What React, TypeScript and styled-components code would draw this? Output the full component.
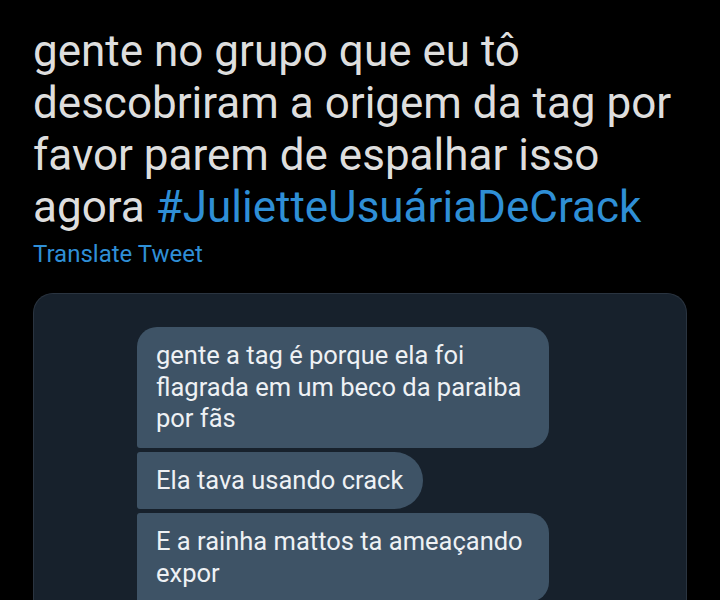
import React from 'react';
import styled, { createGlobalStyle, css } from 'styled-components';

const GlobalStyle = createGlobalStyle`
  html, body {
    margin: 0;
    padding: 0;
    background: #000000;
  }

  body {
    font-family: Roboto, 'Noto Sans', sans-serif;
    -webkit-font-smoothing: antialiased;
  }
`;

const StyledTweet = styled.main`
  width: 720px;
  height: 600px;
  overflow: hidden;
  box-sizing: border-box;
  padding: 25px 0 0 33px;
  background: #000000;
`;

const TweetText = styled.p`
  margin: 0;
  width: 665px;
  font-size: 44px;
  line-height: 52px;
  font-weight: normal;
  color: #dedede;
`;

const Hashtag = styled.span`
  color: #2f8fd6;
`;

const Translate = styled.div`
  margin-top: 6px;
  font-size: 24px;
  line-height: 30px;
  color: #2f8fd6;
`;

const MediaCard = styled.div`
  display: flex;
  flex-direction: column;
  align-items: flex-start;
  gap: 4px;
  width: 654px;
  height: 340px;
  margin-top: 24px;
  padding: 33px 0 0 103px;
  box-sizing: border-box;

  background: #17212c;
  border: 1px solid #2a3440;
  border-bottom: none;
  border-radius: 20px 20px 0 0;
`;

type BubbleKind = 'first' | 'middle';

const Bubble = styled.div<{ $kind: BubbleKind; $pill?: boolean }>`
  max-width: 412px;
  box-sizing: border-box;
  padding: 13px 24px 13px 19px;

  font-size: 25.5px;
  line-height: 31.5px;
  color: #eef1f4;
  background: #3e5366;

  ${({ $kind }) =>
    $kind === 'first'
      ? css`
          border-radius: 20px 20px 20px 3px;
        `
      : css`
          border-radius: 3px 20px 20px 3px;
        `}

  ${({ $pill }) =>
    $pill &&
    css`
      padding-right: 20px;
      border-radius: 3px 29px 29px 3px;
    `}
`;

function App() {
  return (
    <>
      <GlobalStyle />
      <StyledTweet>
        <TweetText>
          gente no grupo que eu tô descobriram a origem da tag por favor parem
          de espalhar isso agora <Hashtag>#JulietteUsuáriaDeCrack</Hashtag>
        </TweetText>
        <Translate>Translate Tweet</Translate>
        <MediaCard>
          <Bubble $kind="first">
            gente a tag é porque ela foi flagrada em um beco da paraiba por
            fãs
          </Bubble>
          <Bubble $kind="middle" $pill>
            Ela tava usando crack
          </Bubble>
          <Bubble $kind="middle">E a rainha mattos ta ameaçando expor</Bubble>
        </MediaCard>
      </StyledTweet>
    </>
  );
}

export default App;
